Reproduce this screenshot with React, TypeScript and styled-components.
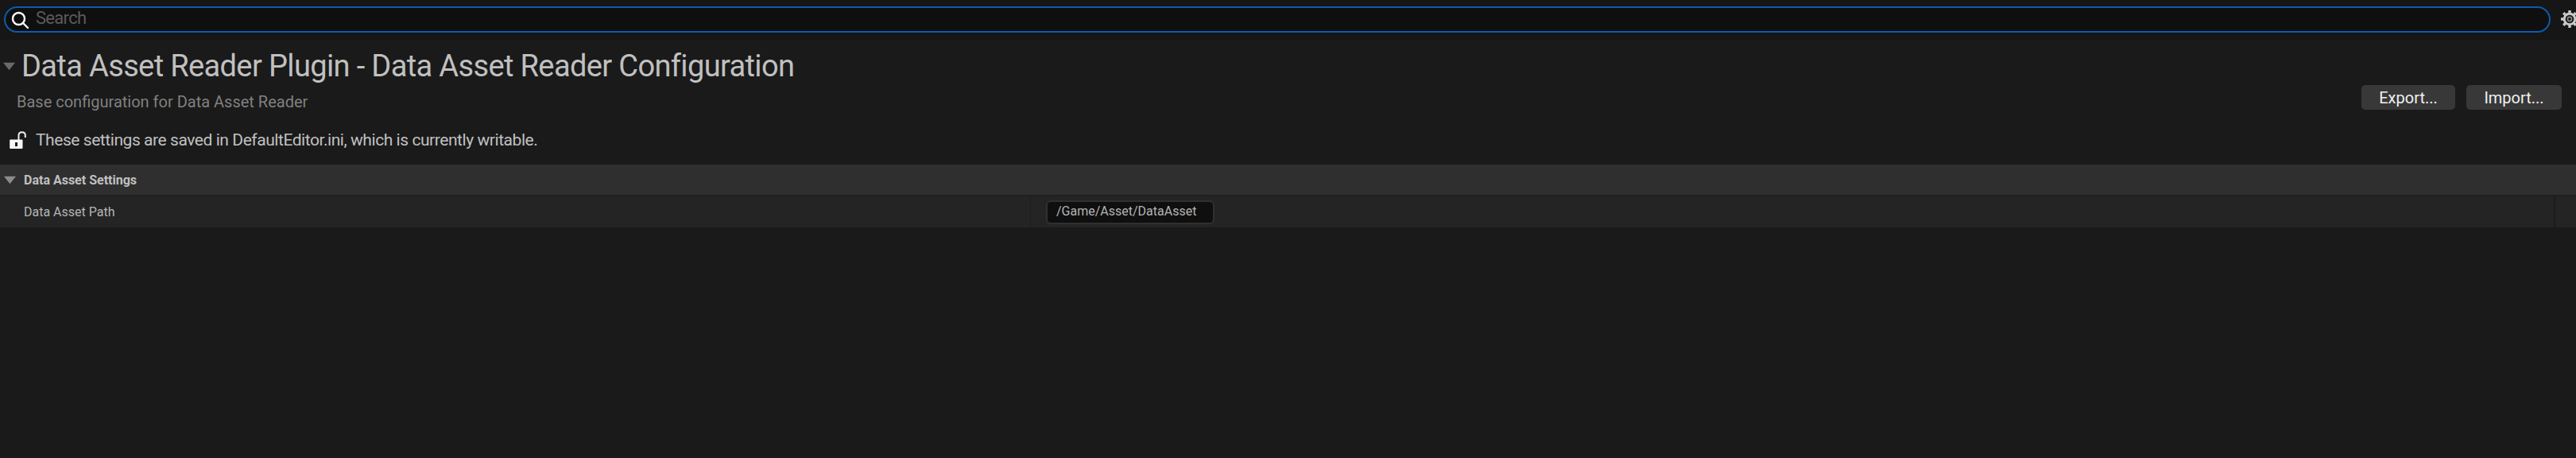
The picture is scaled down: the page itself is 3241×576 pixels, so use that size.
import React from "react";
import styled, { createGlobalStyle } from "styled-components";

const Global = createGlobalStyle`
  html, body { margin: 0; padding: 0; background: #1a1a1a; overflow: hidden; }
  #root { width: 3241px; height: 576px; overflow: hidden; }
`;

const Page = styled.div`
  width: 3241px;
  height: 576px;
  display: flex;
  flex-direction: column;
  background: #1a1a1a;
  font-family: Roboto, "Liberation Sans", sans-serif;
  overflow: hidden;
`;

const Toolbar = styled.div`
  height: 50px;
  flex: none;
  display: flex;
  align-items: flex-start;
  padding: 8px 0 0 5px;
  box-sizing: border-box;
  background: #161616;
`;

const SearchBox = styled.div`
  width: 3204px;
  height: 33px;
  flex: none;
  box-sizing: border-box;
  display: flex;
  align-items: center;
  gap: 7px;
  padding: 0 0 0 5px;
  background: #0f0f0f;
  border: 2px solid #0a5cad;
  border-radius: 17px;
`;

const SearchText = styled.span`
  font-size: 22px;
  letter-spacing: -0.7px;
  color: #5a5a5a;
  transform: translateY(-2px);
`;

const GearWrap = styled.div`
  flex: none;
  margin: 4px 0 0 12px;
  width: 24px;
  height: 24px;
`;

const Head = styled.div`
  height: 157px;
  flex: none;
  box-sizing: border-box;
  display: flex;
  justify-content: space-between;
  padding: 0 18px 0 0;
`;

const HeadLeft = styled.div`
  display: flex;
  flex-direction: column;
`;

const TitleRow = styled.div`
  display: flex;
  align-items: center;
  padding: 12px 0 0 4px;
  gap: 8px;
  height: 42px;
`;

const Title = styled.div`
  font-size: 38px;
  line-height: 42px;
  letter-spacing: -0.63px;
  color: #c0c0c0;
  white-space: nowrap;
`;

const Subtitle = styled.div`
  font-size: 20px;
  line-height: 24px;
  color: #808080;
  margin: 12px 0 0 21px;
  white-space: nowrap;
`;

const Notice = styled.div`
  display: flex;
  align-items: center;
  gap: 11px;
  padding-left: 12px;
  margin-top: 23px;
`;

const NoticeText = styled.div`
  font-size: 21px;
  line-height: 26px;
  letter-spacing: -0.44px;
  color: #c0c0c0;
  white-space: nowrap;
`;

const Buttons = styled.div`
  display: flex;
  gap: 14px;
  padding-top: 57px;
  align-items: flex-start;
`;

const Button = styled.div<{ $w: number }>`
  width: ${(p) => p.$w}px;
  height: 31px;
  display: flex;
  align-items: center;
  justify-content: center;
  background: #383838;
  border-radius: 5px;
  color: #f0f0f0;
  font-size: 20px;
`;

const SectionHeader = styled.div`
  height: 40px;
  flex: none;
  box-sizing: border-box;
  display: flex;
  align-items: center;
  gap: 10px;
  padding-left: 5px;
  background: #2f2f2f;
  border-bottom: 2px solid #1f1f1f;
`;

const SectionTitle = styled.div`
  font-size: 16px;
  font-weight: 700;
  color: #c0c0c0;
  white-space: nowrap;
  padding-top: 1px;
`;

const Row = styled.div`
  height: 39px;
  flex: none;
  display: grid;
  grid-template-columns: 1296px 1917px 1fr;
  background: #242424;
`;

const NameCell = styled.div`
  display: flex;
  align-items: center;
  padding-left: 30px;
  font-size: 16px;
  color: #b4b4b4;
`;

const ValueCell = styled.div`
  display: flex;
  align-items: center;
  border-left: 1px solid #1c1c1c;
  padding-left: 19px;
`;

const EndCell = styled.div`
  border-left: 2px solid #1c1c1c;
`;

const InputBox = styled.div`
  width: 212px;
  height: 30px;
  box-sizing: border-box;
  padding: 0 0 3px 11px;
  display: flex;
  align-items: center;
  background: #0f0f0f;
  border: 2px solid #303030;
  border-radius: 6px;
  font-size: 16px;
  color: #b4b4b4;
`;

const Caret = ({ size, color }: { size: number; color: string }) => (
  <svg width={size} height={size * 0.7} viewBox="0 0 10 7">
    <path d="M0 0.5H10L5 6.8Z" fill={color} />
  </svg>
);

const SearchIcon = () => (
  <svg width="26" height="26" viewBox="0 0 26 26" fill="none" stroke="#fff" strokeWidth="2.4">
    <circle cx="11.5" cy="11.5" r="7.5" />
    <path d="M17 17L23 23" strokeLinecap="round" />
  </svg>
);

const GearIcon = () => (
  <svg width="24" height="24" viewBox="0 0 24 24" fill="none">
    <circle cx="12" cy="12" r="6.8" stroke="#c8c8c8" strokeWidth="3" />
    <circle cx="12" cy="12" r="2.6" stroke="#8a8a8a" strokeWidth="1.6" />
    <g stroke="#c8c8c8" strokeWidth="3.4">
      <path d="M12 1V5M12 19V23M1 12H5M19 12H23M4.2 4.2L7 7M17 17L19.8 19.8M4.2 19.8L7 17M17 7L19.8 4.2" />
    </g>
  </svg>
);

const LockIcon = () => (
  <svg width="22" height="22" viewBox="0 0 22 22" fill="none">
    <path d="M11.5 11V5C11.5 2.8 13 1.2 15.5 1.2C18 1.2 19.8 2.8 19.8 5V8" stroke="#f0f0f0" strokeWidth="2" />
    <rect x="0.2" y="10.5" width="16.3" height="11.5" rx="1" fill="#f5f5f5" />
    <rect x="7" y="14" width="3" height="5" fill="#1a1a1a" />
  </svg>
);

export default function App() {
  return (
    <Page>
      <Global />
      <Toolbar>
        <SearchBox>
          <SearchIcon />
          <SearchText>Search</SearchText>
        </SearchBox>
        <GearWrap>
          <GearIcon />
        </GearWrap>
      </Toolbar>
      <Head>
        <HeadLeft>
          <TitleRow>
            <Caret size={15} color="#6a6a6a" />
            <Title>Data Asset Reader Plugin - Data Asset Reader Configuration</Title>
          </TitleRow>
          <Subtitle>Base configuration for Data Asset Reader</Subtitle>
          <Notice>
            <LockIcon />
            <NoticeText>These settings are saved in DefaultEditor.ini, which is currently writable.</NoticeText>
          </Notice>
        </HeadLeft>
        <Buttons>
          <Button $w={118}>Export...</Button>
          <Button $w={120}>Import...</Button>
        </Buttons>
      </Head>
      <SectionHeader>
        <Caret size={15} color="#8c8c8c" />
        <SectionTitle>Data Asset Settings</SectionTitle>
      </SectionHeader>
      <Row>
        <NameCell>Data Asset Path</NameCell>
        <ValueCell>
          <InputBox>/Game/Asset/DataAsset</InputBox>
        </ValueCell>
        <EndCell />
      </Row>
    </Page>
  );
}
